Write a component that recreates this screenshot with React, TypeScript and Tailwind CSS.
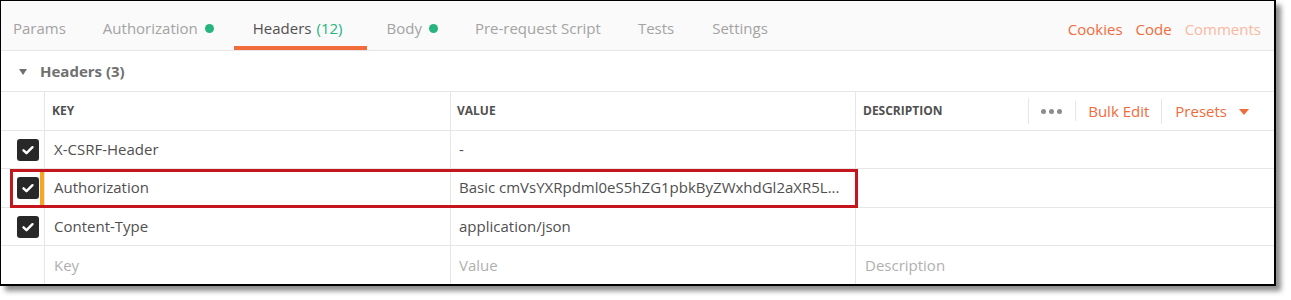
const tabs = [
  { label: "Params", dot: false, cls: "pl-[12px] pr-[18px]" },
  { label: "Authorization", dot: true, cls: "pl-[19px] pr-[20px]" },
  { label: "Headers", count: "(12)", active: true, cls: "pl-[19px] pr-[25px]" },
  { label: "Body", dot: true, cls: "pl-[19px] pr-[18px]" },
  { label: "Pre-request Script", dot: false, cls: "pl-[19px] pr-[18px]" },
  { label: "Tests", dot: false, cls: "px-[19px]" },
  { label: "Settings", dot: false, cls: "px-[19px]" },
];

const rows = [
  { key: "X-CSRF-Header", value: "-", h: "h-[38px]" },
  { key: "Authorization", value: "Basic cmVsYXRpdml0eS5hZG1pbkByZWxhdGl2aXR5L...", h: "h-[39px]", flag: true },
  { key: "Content-Type", value: "application/json", h: "h-[38px]" },
];

const Check = () => (
  <div className="w-[22px] h-[22px] rounded-[3px] bg-[#282828] flex items-center justify-center">
    <svg width="14" height="14" viewBox="0 0 14 14">
      <path d="M2.5 7.3l3 2.9 6-6" fill="none" stroke="#fff" strokeWidth="2.4" strokeLinecap="round" strokeLinejoin="round" />
    </svg>
  </div>
);

export default function App() {
  return (
    <div className="w-[1291px] h-[300px] bg-white font-['Open_Sans',sans-serif]">
      <div className="relative w-[1276px] h-[286px] border-t border-l border-r-2 border-b-2 border-black bg-white shadow-[5px_5px_5px_rgba(0,0,0,0.45)] flex flex-col">
        {/* Tabs */}
        <div className="flex h-[50px] shrink-0 border-b border-[#e6e6e6] bg-[#fafafa]">
          {tabs.map((t) => (
            <div key={t.label} className={`relative flex items-center pt-[5px] text-[15px] ${t.cls} ${t.active ? "text-[#505050]" : "text-[#a3a3a3]"}`}>
              <span>{t.label}</span>
              {t.count && <span className="ml-[5px] text-[#26b47f]">{t.count}</span>}
              {t.dot && <span className="ml-[7px] mt-[1px] w-[9px] h-[9px] rounded-full bg-[#26b47f]"></span>}
              {t.active && <div className="absolute left-0 right-0 bottom-0 h-[4px] bg-[#f26b3a]"></div>}
            </div>
          ))}
          <div className="ml-auto flex items-center gap-[13px] pr-[13px] pt-[7px] text-[15px]">
            <span className="text-[#f26b3a]">Cookies</span>
            <span className="text-[#f26b3a]">Code</span>
            <span className="text-[#f9b89f]">Comments</span>
          </div>
        </div>

        {/* Section header */}
        <div className="flex items-center h-[41px] shrink-0 border-b border-[#e6e6e6] pl-[18px]">
          <svg width="8" height="6" viewBox="0 0 8 6" className="mt-[1px]">
            <path d="M0 0h8L4 6z" fill="#707070" />
          </svg>
          <span className="ml-[13px] text-[15px] font-bold text-[#707070]">Headers (3)</span>
        </div>

        {/* Table header */}
        <div className="flex h-[39px] shrink-0 border-b border-[#e6e6e6] text-[12px] font-bold text-[#505050]">
          <div className="w-[44px] border-r border-[#e6e6e6]"></div>
          <div className="w-[406px] border-r border-[#e6e6e6] flex items-center px-[7px]">KEY</div>
          <div className="w-[405px] border-r border-[#e6e6e6] flex items-center px-[6px]">VALUE</div>
          <div className="flex-1 flex items-center pl-[7px] pr-[25px]">
            <span>DESCRIPTION</span>
            <div className="ml-auto flex items-center font-normal text-[15px]">
              <div className="w-px h-[26px] bg-[#e6e6e6]"></div>
              <div className="ml-[12px] flex items-center gap-[3px]">
                <span className="w-[5px] h-[5px] rounded-full bg-[#8c8c8c]"></span>
                <span className="w-[5px] h-[5px] rounded-full bg-[#8c8c8c]"></span>
                <span className="w-[5px] h-[5px] rounded-full bg-[#8c8c8c]"></span>
              </div>
              <div className="ml-[13px] w-px h-[20px] bg-[#e6e6e6]"></div>
              <span className="ml-[12px] text-[#f26b3a]">Bulk Edit</span>
              <div className="ml-[12px] w-px h-[25px] bg-[#e6e6e6]"></div>
              <span className="ml-[13px] text-[#f26b3a]">Presets</span>
              <svg width="10" height="6" viewBox="0 0 10 6" className="ml-[12px] mt-[2px]">
                <path d="M0 0h10L5 6z" fill="#f26b3a" />
              </svg>
            </div>
          </div>
        </div>

        {/* Rows */}
        {rows.map((r) => (
          <div key={r.key} className={`flex ${r.h} shrink-0 border-b border-[#e6e6e6] text-[15px] text-[#505050]`}>
            <div className="relative w-[44px] border-r border-[#e6e6e6] flex items-center pl-[16px]">
              <Check />
              {r.flag && <div className="absolute right-0 top-0 bottom-0 w-[4px] bg-[#f5a623]"></div>}
            </div>
            <div className="w-[406px] border-r border-[#e6e6e6] flex items-center px-[9px] pb-[1px]">{r.key}</div>
            <div className="w-[405px] border-r border-[#e6e6e6] flex items-center px-[8px] pb-[1px] whitespace-nowrap overflow-hidden">{r.value}</div>
            <div className="flex-1"></div>
          </div>
        ))}
        <div className="flex flex-1 text-[15px] text-[#b0b0b0]">
          <div className="w-[44px] border-r border-[#e6e6e6]"></div>
          <div className="w-[406px] border-r border-[#e6e6e6] flex items-center px-[9px]">Key</div>
          <div className="w-[405px] border-r border-[#e6e6e6] flex items-center px-[8px]">Value</div>
          <div className="flex-1 flex items-center px-[9px]">Description</div>
        </div>

        {/* Annotation box */}
        <div className="absolute left-[9px] top-[168px] w-[848px] h-[39px] border-[3px] border-[#c4161c] pointer-events-none"></div>
      </div>
    </div>
  );
}
